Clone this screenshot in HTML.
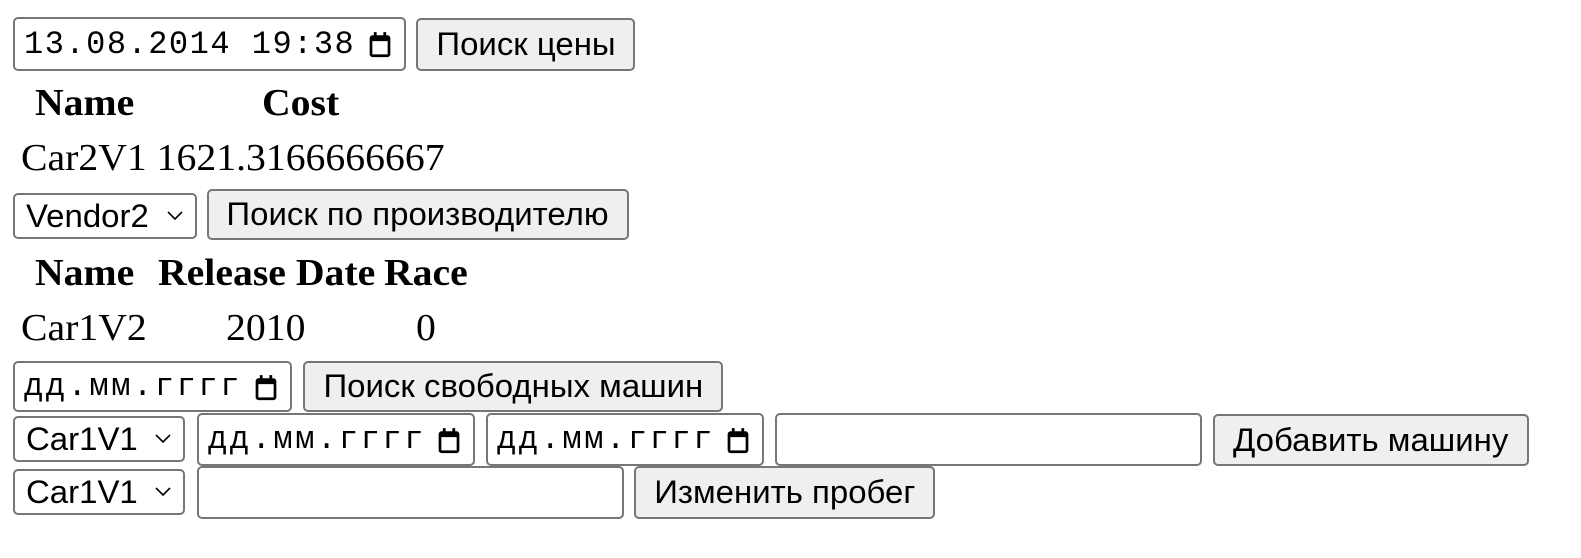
<!DOCTYPE html>
<html><head><meta charset="utf-8"><style>
body{margin:0;width:1581px;height:558px;background:#fff;position:relative;overflow:hidden}
.b{position:absolute;box-sizing:border-box;border:2px solid #767676;border-radius:5px;background:#fff;font-family:"Liberation Sans",sans-serif;font-size:32px;color:#000;display:flex;align-items:center;white-space:nowrap}
.btn{background:#efefef;justify-content:center}
.btn span,.sel span{display:inline-block;transform:scaleX(1.03)}
.sel span{transform-origin:left center}
.d{font-family:"Liberation Mono",monospace;font-size:32px;letter-spacing:1.5px;padding-left:9px}
.d2{letter-spacing:2.6px}
.sel{padding-left:11px}
.t{position:absolute;font-family:"Liberation Serif",serif;font-size:38px;white-space:nowrap;line-height:1;transform:scaleX(1.045);transform-origin:left center}
.h{font-weight:bold}
.cal{position:absolute;right:12px;top:50%;margin-top:-13px;width:24px;height:27px}
.chev{position:absolute;right:12px;top:50%;margin-top:-5px}
</style></head><body>
<svg width="0" height="0" style="position:absolute"><defs><symbol id="c" viewBox="0 0 20 24"><rect x="2" y="5" width="16" height="17" rx="1.5" fill="none" stroke="#000" stroke-width="2.4"/><rect x="2" y="4" width="16" height="5" fill="#000"/><rect x="4.5" y="1" width="2.5" height="5" fill="#000"/><rect x="13" y="1" width="2.5" height="5" fill="#000"/></symbol>
<symbol id="v" viewBox="0 0 16 10"><path d="M1 1 L8 8 L15 1" fill="none" stroke="#000" stroke-width="1.6"/></symbol></defs></svg>

<div class="b d" style="left:13px;top:17px;width:393px;height:54px">13.08.2014 19:38<svg class="cal"><use href="#c"/></svg></div>
<div class="b btn" style="left:416px;top:18px;width:219px;height:53px"><span>Поиск цены</span></div>

<div class="t h" style="left:35px;top:84px">Name</div>
<div class="t h" style="left:262px;top:84px">Cost</div>
<div class="t" style="left:21px;top:139px">Car2V1 1621.3166666667</div>

<div class="b sel" style="left:13px;top:193px;width:184px;height:46px"><span>Vendor2</span><svg class="chev" width="16" height="10"><use href="#v"/></svg></div>
<div class="b btn" style="left:207px;top:189px;width:422px;height:51px"><span>Поиск по производителю</span></div>

<div class="t h" style="left:35px;top:254px">Name</div>
<div class="t h" style="left:158px;top:254px">Release Date</div>
<div class="t h" style="left:384px;top:254px">Race</div>
<div class="t" style="left:21px;top:309px">Car1V2</div>
<div class="t" style="left:226px;top:309px">2010</div>
<div class="t" style="left:416px;top:309px">0</div>

<div class="b d d2" style="left:13px;top:361px;width:279px;height:51px">дд.мм.гггг<svg class="cal"><use href="#c"/></svg></div>
<div class="b btn" style="left:303px;top:361px;width:420px;height:51px"><span>Поиск свободных машин</span></div>

<div class="b sel" style="left:13px;top:416px;width:172px;height:46px"><span>Car1V1</span><svg class="chev" width="16" height="10"><use href="#v"/></svg></div>
<div class="b d d2" style="left:197px;top:413px;width:278px;height:53px">дд.мм.гггг<svg class="cal"><use href="#c"/></svg></div>
<div class="b d d2" style="left:486px;top:413px;width:278px;height:53px">дд.мм.гггг<svg class="cal"><use href="#c"/></svg></div>
<div class="b" style="left:775px;top:413px;width:427px;height:53px"></div>
<div class="b btn" style="left:1213px;top:414px;width:316px;height:52px"><span>Добавить машину</span></div>

<div class="b sel" style="left:13px;top:469px;width:172px;height:46px"><span>Car1V1</span><svg class="chev" width="16" height="10"><use href="#v"/></svg></div>
<div class="b" style="left:197px;top:466px;width:427px;height:53px"></div>
<div class="b btn" style="left:634px;top:466px;width:301px;height:53px"><span>Изменить пробег</span></div>
</body></html>
